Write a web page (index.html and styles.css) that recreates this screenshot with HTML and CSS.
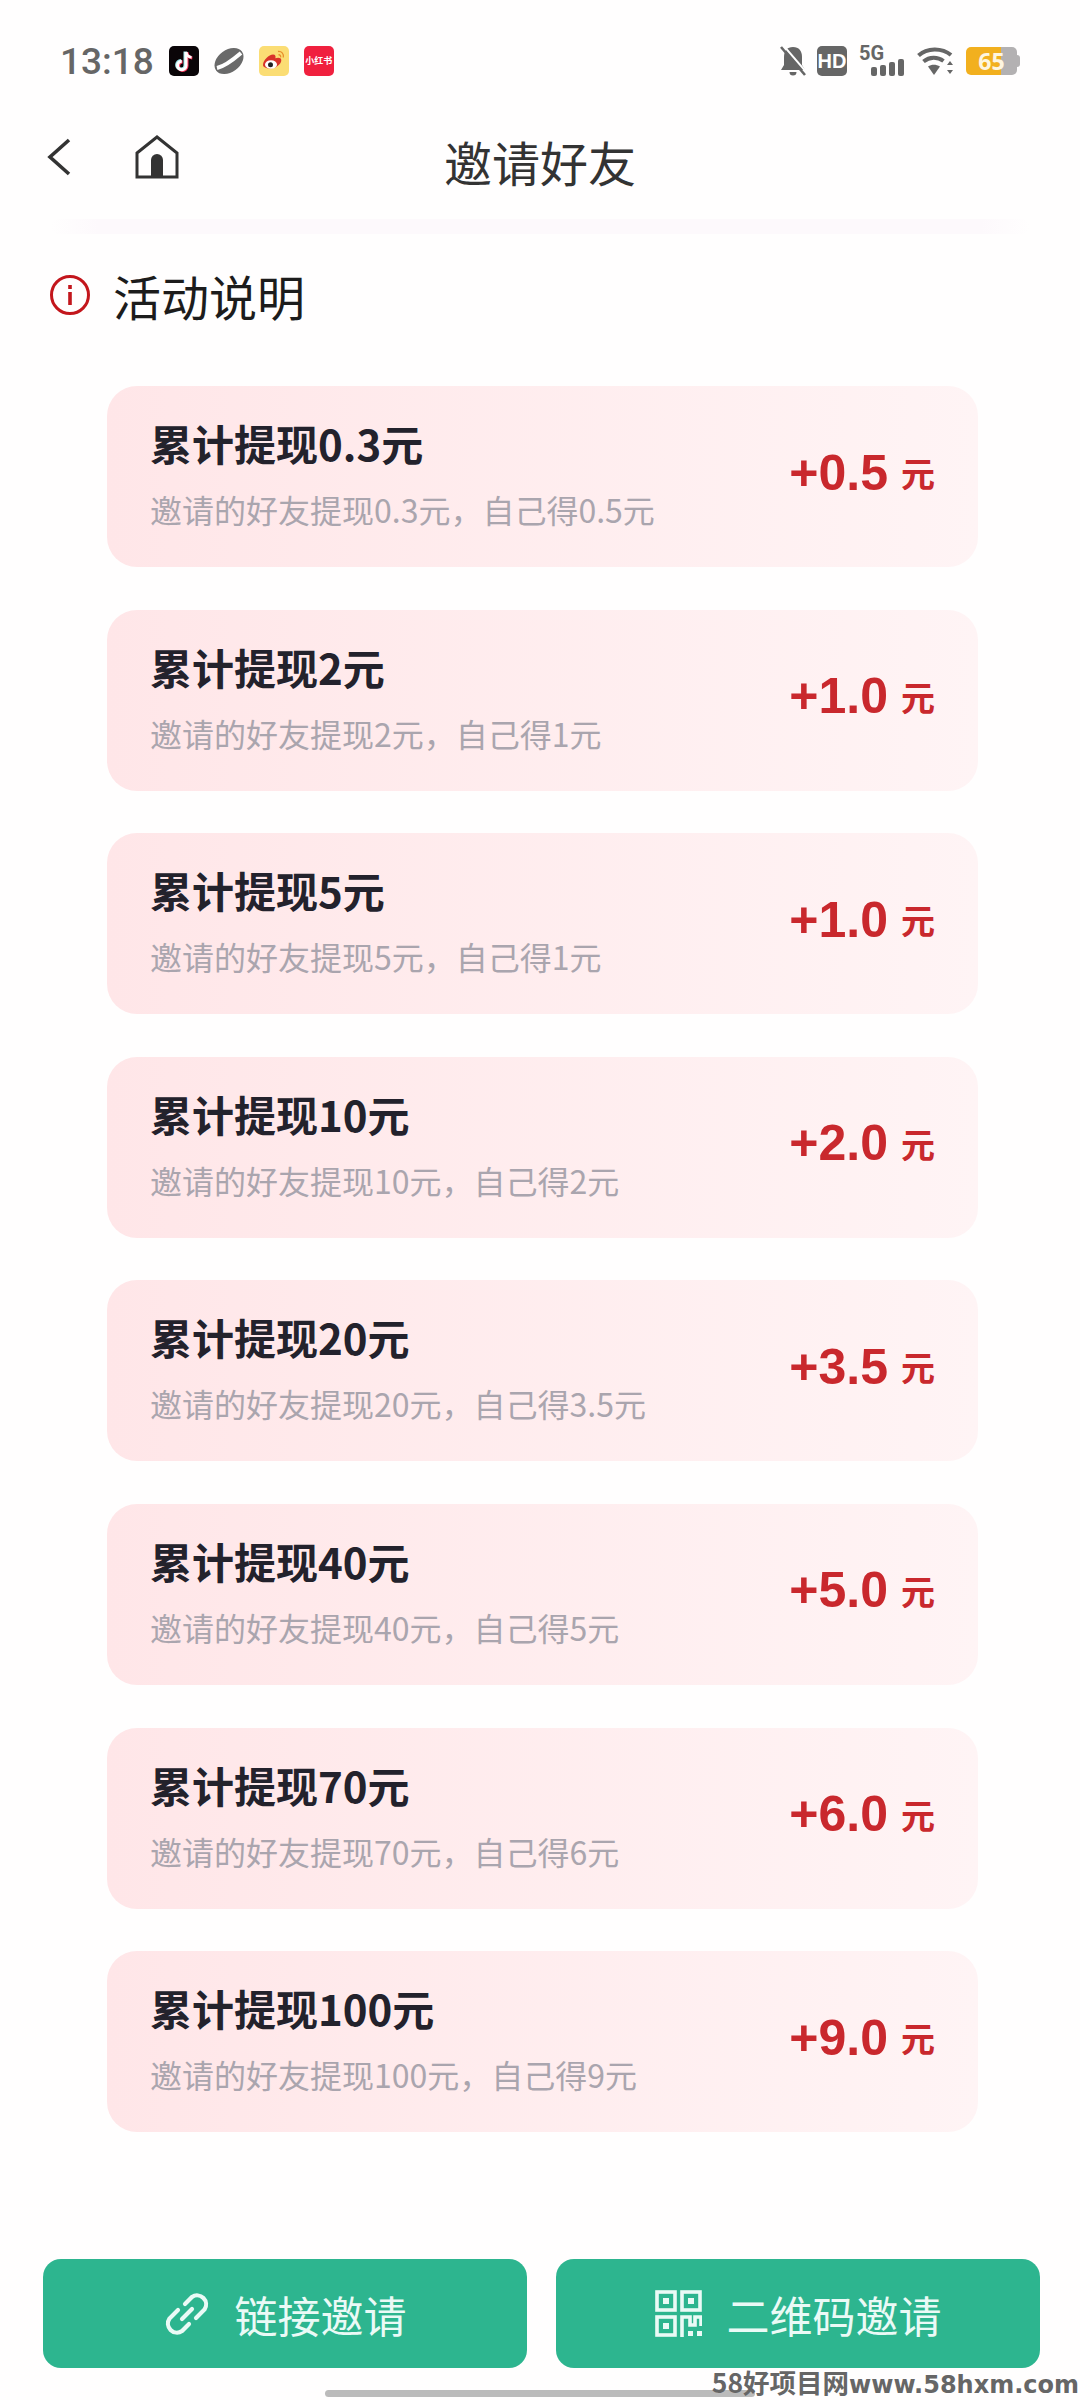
FILE: index.html
```html
<!DOCTYPE html>
<html lang="zh-CN">
<head>
  <meta charset="UTF-8" />
  <meta name="viewport" content="width=device-width, initial-scale=1.0" />
  <title>邀请好友</title>
  <link rel="stylesheet" href="styles.css">
</head>
<body>
  <div class="page">

    <div class="status-bar">
      <div class="status-left">
        <span class="time">13:18</span>
        <span class="app-icon tiktok">
          <svg viewBox="0 0 30 30" width="30" height="30">
            <path d="M17 6v13.500a4.200 4.200 0 1 1-4.200-4.200" fill="none" stroke="#ff3d63" stroke-width="3.400" transform="translate(.8 .6)"/>
            <path d="M17 6c.5 3.200 2.500 5 5.500 5.300" fill="none" stroke="#ff3d63" stroke-width="3" transform="translate(.8 .6)"/>
            <path d="M17 6v13.500a4.200 4.200 0 1 1-4.200-4.200" fill="none" stroke="#9fe9ee" stroke-width="3.400" transform="translate(-.8 -.6)"/>
            <path d="M17 6v13.500a4.200 4.200 0 1 1-4.200-4.200" fill="none" stroke="#fff" stroke-width="3"/>
            <path d="M17 6c.5 3.200 2.500 5 5.500 5.300" fill="none" stroke="#fff" stroke-width="2.600"/>
          </svg>
        </span>
        <span class="app-icon">
          <svg viewBox="0 0 30 30" width="30" height="30">
            <ellipse cx="15" cy="15" rx="16" ry="11" fill="#6a6a6a" transform="rotate(-36 15 15)"/>
            <path d="M3 22C10 20.500 20 13 27 7" fill="none" stroke="#fff" stroke-width="4"/>
          </svg>
        </span>
        <span class="app-icon weibo">
          <svg viewBox="0 0 30 30" width="30" height="30">
            <path d="M4 19c0-5 6-10.500 10-10.500 2.500 0 3 2 2.300 3.800 3-1 6-.6 6 2 0 4-5.500 8.200-11 8.200-4 0-7.300-1.300-7.300-3.500z" fill="#d9332a"/>
            <ellipse cx="12" cy="18.500" rx="6" ry="4.300" fill="#fff"/>
            <circle cx="11.500" cy="18.700" r="2.500" fill="#222"/>
            <path d="M19 5.500c3.500-.5 6 2.300 5.300 6M19.500 8.800c1.500-.2 2.400 1 2.100 2.500" fill="none" stroke="#e8902c" stroke-width="1.300"/>
          </svg>
        </span>
        <span class="app-icon xhs">小红书</span>
      </div>
      <div class="status-right">
        <svg class="bell" viewBox="0 0 26 30" width="26" height="30">
          <path d="M13 1c6 0 9 4 9 10v8l3 5H1l3-5v-8c0-6 3-10 9-10zM9.500 26h7a3.500 3.500 0 0 1-7 0z" fill="#666"/>
          <path d="M3 -1 27 27" stroke="#fff" stroke-width="2"/>
          <path d="M1 1 25 29" stroke="#666" stroke-width="2.600"/>
        </svg>
        <span class="hd">HD</span>
        <span class="signal">
          <span class="five-g">5G</span>
          <span class="bars"><i class="b1"></i><i class="b2"></i><i class="b3"></i><i class="b4"></i></span>
        </span>
        <svg class="wifi" viewBox="0 0 37 30" width="37" height="30">
          <path d="M1.500 9.500C10 1.500 25 1.500 34 9M6.500 15.500c6-5 14-5 20-.5" fill="none" stroke="#666" stroke-width="4"/>
          <path d="M11 20.500c3.500-2.500 8-2.500 12 0L17 29z" fill="#666"/>
          <path d="M33 15l3 4h-6zM33 28l3-4h-6z" fill="#666"/>
        </svg>
        <span class="battery">
          <span class="battery-body"><span class="battery-num">65</span></span>
          <span class="battery-tip"></span>
        </span>
      </div>
    </div>

    <header class="nav-bar">
      <div class="nav-left">
        <svg viewBox="0 0 26 40" width="26" height="40">
          <path d="M23 3 4 20l19 17" fill="none" stroke="#333" stroke-width="3.600"/>
        </svg>
        <svg viewBox="0 0 44 44" width="44" height="44">
          <path d="M2 18 22 2l20 16v24H2z" fill="none" stroke="#333" stroke-width="3"/>
          <path d="M16 42V25a6 6 0 0 1 12 0v17z" fill="#333"/>
        </svg>
      </div>
      <h1>邀请好友</h1>
    </header>
    <div class="nav-shadow"></div>

    <div class="section-title">
      <svg viewBox="0 0 42 42" width="42" height="42">
        <circle cx="21" cy="21" r="18.500" fill="none" stroke="#c3161c" stroke-width="3"/>
        <rect x="19.200" y="11" width="3.600" height="4" fill="#c3161c"/>
        <rect x="19.200" y="18" width="3.600" height="13" fill="#c3161c"/>
      </svg>
      <h2>活动说明</h2>
    </div>

    <main class="card-list">
      <div class="reward-card">
        <div class="reward-text"><h3>累计提现0.3元</h3><p>邀请的好友提现0.3元，自己得0.5元</p></div>
        <div class="reward-amount">+0.5<span>元</span></div>
      </div>
      <div class="reward-card">
        <div class="reward-text"><h3>累计提现2元</h3><p>邀请的好友提现2元，自己得1元</p></div>
        <div class="reward-amount">+1.0<span>元</span></div>
      </div>
      <div class="reward-card">
        <div class="reward-text"><h3>累计提现5元</h3><p>邀请的好友提现5元，自己得1元</p></div>
        <div class="reward-amount">+1.0<span>元</span></div>
      </div>
      <div class="reward-card">
        <div class="reward-text"><h3>累计提现10元</h3><p>邀请的好友提现10元，自己得2元</p></div>
        <div class="reward-amount">+2.0<span>元</span></div>
      </div>
      <div class="reward-card">
        <div class="reward-text"><h3>累计提现20元</h3><p>邀请的好友提现20元，自己得3.5元</p></div>
        <div class="reward-amount">+3.5<span>元</span></div>
      </div>
      <div class="reward-card">
        <div class="reward-text"><h3>累计提现40元</h3><p>邀请的好友提现40元，自己得5元</p></div>
        <div class="reward-amount">+5.0<span>元</span></div>
      </div>
      <div class="reward-card">
        <div class="reward-text"><h3>累计提现70元</h3><p>邀请的好友提现70元，自己得6元</p></div>
        <div class="reward-amount">+6.0<span>元</span></div>
      </div>
      <div class="reward-card">
        <div class="reward-text"><h3>累计提现100元</h3><p>邀请的好友提现100元，自己得9元</p></div>
        <div class="reward-amount">+9.0<span>元</span></div>
      </div>
    </main>

    <div class="action-bar">
      <button class="invite-btn">
        <svg viewBox="0 0 46 46" width="46" height="46">
          <path d="M21 13l7-7a9 9 0 0 1 12.500 12.500L32 27M25 33l-7 7A9 9 0 0 1 5.500 27.500L14 19M18 28l10-10" fill="none" stroke="#eafaf6" stroke-width="4.200" stroke-linecap="round"/>
        </svg>
        链接邀请
      </button>
      <button class="invite-btn">
        <svg viewBox="0 0 47 47" width="47" height="47">
          <g fill="none" stroke="#eafaf6" stroke-width="3.600">
            <rect x="2" y="2" width="18" height="18"/>
            <rect x="27" y="2" width="18" height="18"/>
            <rect x="2" y="27" width="18" height="18"/>
            <path d="M27 47V27h8v8h5v-8h6v9"/>
          </g>
          <g fill="#eafaf6">
            <rect x="8" y="8" width="6" height="6"/>
            <rect x="33" y="8" width="6" height="6"/>
            <rect x="8" y="33" width="6" height="6"/>
            <rect x="33" y="41" width="5" height="5"/>
            <rect x="42" y="41" width="5" height="5"/>
          </g>
        </svg>
        二维码邀请
      </button>
    </div>

    <div class="home-indicator"></div>
    <div class="watermark">58好项目网<span>www.58hxm.com</span></div>
  </div>
</body>
</html>
```

FILE: styles.css
```css
html, body {
  margin: 0;
  padding: 0;
  background-color: #fffefe;
  font-family: "Noto Sans CJK SC", "Noto Sans", sans-serif;
}

.page {
  position: relative;
  width: 1080px;
  height: 2400px;
  display: flex;
  flex-direction: column;
  overflow: hidden;
}

/* status bar */
.status-bar {
  display: flex;
  justify-content: space-between;
  align-items: center;
  height: 30px;
  padding: 46px 60px 0 60px;
}

.status-left,
.status-right {
  display: flex;
  align-items: center;
}

.status-left {
  gap: 15px;
}

.time {
  font-family: Roboto, sans-serif;
  font-size: 37px;
  font-weight: 500;
  color: #666;
}

.app-icon {
  width: 30px;
  height: 30px;
  border-radius: 5px;
  display: block;
}

.tiktok {
  background-color: #0a0508;
}

.weibo {
  background-color: #fbdd74;
}

.xhs {
  background-color: #f0203e;
  color: white;
  font-size: 9px;
  font-weight: 700;
  line-height: 30px;
  text-align: center;
  white-space: nowrap;
  overflow: hidden;
}

.status-right {
  gap: 11px;
}

.hd {
  width: 30px;
  height: 30px;
  border-radius: 5px;
  background-color: #666;
  color: white;
  font-family: "Liberation Sans", sans-serif;
  font-size: 20px;
  font-weight: 700;
  line-height: 30px;
  text-align: center;
}

.signal {
  position: relative;
  display: block;
  width: 45px;
  height: 30px;
  margin-left: 1px;
  margin-right: 2px;
}

.five-g {
  position: absolute;
  left: 0;
  top: -3px;
  font-family: Roboto, sans-serif;
  font-size: 20px;
  font-weight: 700;
  color: #666;
  line-height: 20px;
}

.bars {
  position: absolute;
  right: 0;
  bottom: 0;
  display: flex;
  align-items: flex-end;
  gap: 3px;
}

.bars i {
  display: block;
  width: 6px;
  border-radius: 2px;
  background-color: #666;
}

.bars .b1 { height: 9px; }
.bars .b2 { height: 11px; }
.bars .b3 { height: 14px; }
.bars .b4 { height: 17px; }

.battery {
  display: flex;
  align-items: center;
  margin-left: 1px;
}

.battery-body {
  display: block;
  width: 51px;
  height: 28px;
  border-radius: 5px;
  background: linear-gradient(90deg, #f2b01e 0 68%, #b3b1b2 68% 100%);
  text-align: center;
}

.battery-num {
  font-family: "Open Sans", sans-serif;
  font-size: 23px;
  font-weight: 700;
  line-height: 28px;
  color: #fdf6e0;
  display: block;
}

.battery-tip {
  width: 3px;
  height: 12px;
  border-radius: 0 3px 3px 0;
  background-color: #b3b1b2;
}

/* nav */
.nav-bar {
  position: relative;
  height: 90px;
  margin-top: 36px;
  display: flex;
  align-items: center;
  justify-content: center;
}

.nav-left {
  position: absolute;
  left: 46px;
  top: 23px;
  display: flex;
  align-items: center;
  gap: 63px;
}

.nav-bar h1 {
  margin: 8px 0 0 0;
  font-size: 48px;
  font-weight: 400;
  color: #333;
  line-height: 64px;
}

.nav-shadow {
  height: 15px;
  margin: 17px 50px 0 50px;
  border-radius: 8px;
  background: linear-gradient(90deg, #fffefe, #fdf9fc 5%, #fdf9fc 95%, #fffefe);
}

.section-title {
  display: flex;
  align-items: center;
  gap: 22px;
  margin: 29px 0 0 49px;
  height: 64px;
}

.section-title h2 {
  margin: 0;
  font-size: 48px;
  font-weight: 400;
  color: #1c1c1c;
  line-height: 64px;
}

/* reward cards */
.card-list {
  flex: 1;
  display: flex;
  flex-direction: column;
  gap: 42.600px;
  margin: 59px 102px 0 107px;
}

.reward-card {
  height: 181px;
  box-sizing: border-box;
  padding: 0 43px;
  display: flex;
  justify-content: space-between;
  align-items: center;
  border-radius: 30px;
  background: linear-gradient(90deg, #ffe6e8, #fff4f5);
}

.reward-text {
  margin-bottom: 4px;
}

.reward-text h3 {
  margin: 0;
  font-size: 42px;
  font-weight: 700;
  color: #23222c;
  line-height: 50px;
}

.reward-text p {
  margin: 19px 0 0 0;
  font-size: 32px;
  font-weight: 400;
  color: #aaa5ae;
  line-height: 44px;
}

.reward-amount {
  display: flex;
  align-items: center;
  margin-bottom: 8px;
  font-family: "Liberation Sans", sans-serif;
  font-size: 50px;
  font-weight: 700;
  color: #c9282d;
  white-space: nowrap;
}

.reward-amount span {
  font-family: "Noto Sans CJK SC", sans-serif;
  font-size: 34px;
  font-weight: 700;
  margin-left: 13px;
}

/* bottom buttons */
.action-bar {
  display: flex;
  gap: 29px;
  padding: 0 40px 0 43px;
}

.invite-btn {
  flex: 1;
  height: 109px;
  border: none;
  border-radius: 18px;
  background-color: #2db58f;
  color: #eafaf6;
  font-family: inherit;
  font-size: 43px;
  display: flex;
  justify-content: center;
  align-items: center;
  gap: 25px;
  padding: 0;
}

.home-indicator {
  width: 430px;
  height: 7px;
  margin: 22px auto 3px auto;
  border-radius: 4px;
  background-color: #bbb;
}

.watermark {
  position: absolute;
  right: 1px;
  bottom: 0;
  font-size: 26.500px;
  font-weight: 700;
  color: #666;
  line-height: 30px;
  white-space: nowrap;
}

.watermark span {
  font-family: "DejaVu Sans", sans-serif;
  font-size: 24px;
}
```
